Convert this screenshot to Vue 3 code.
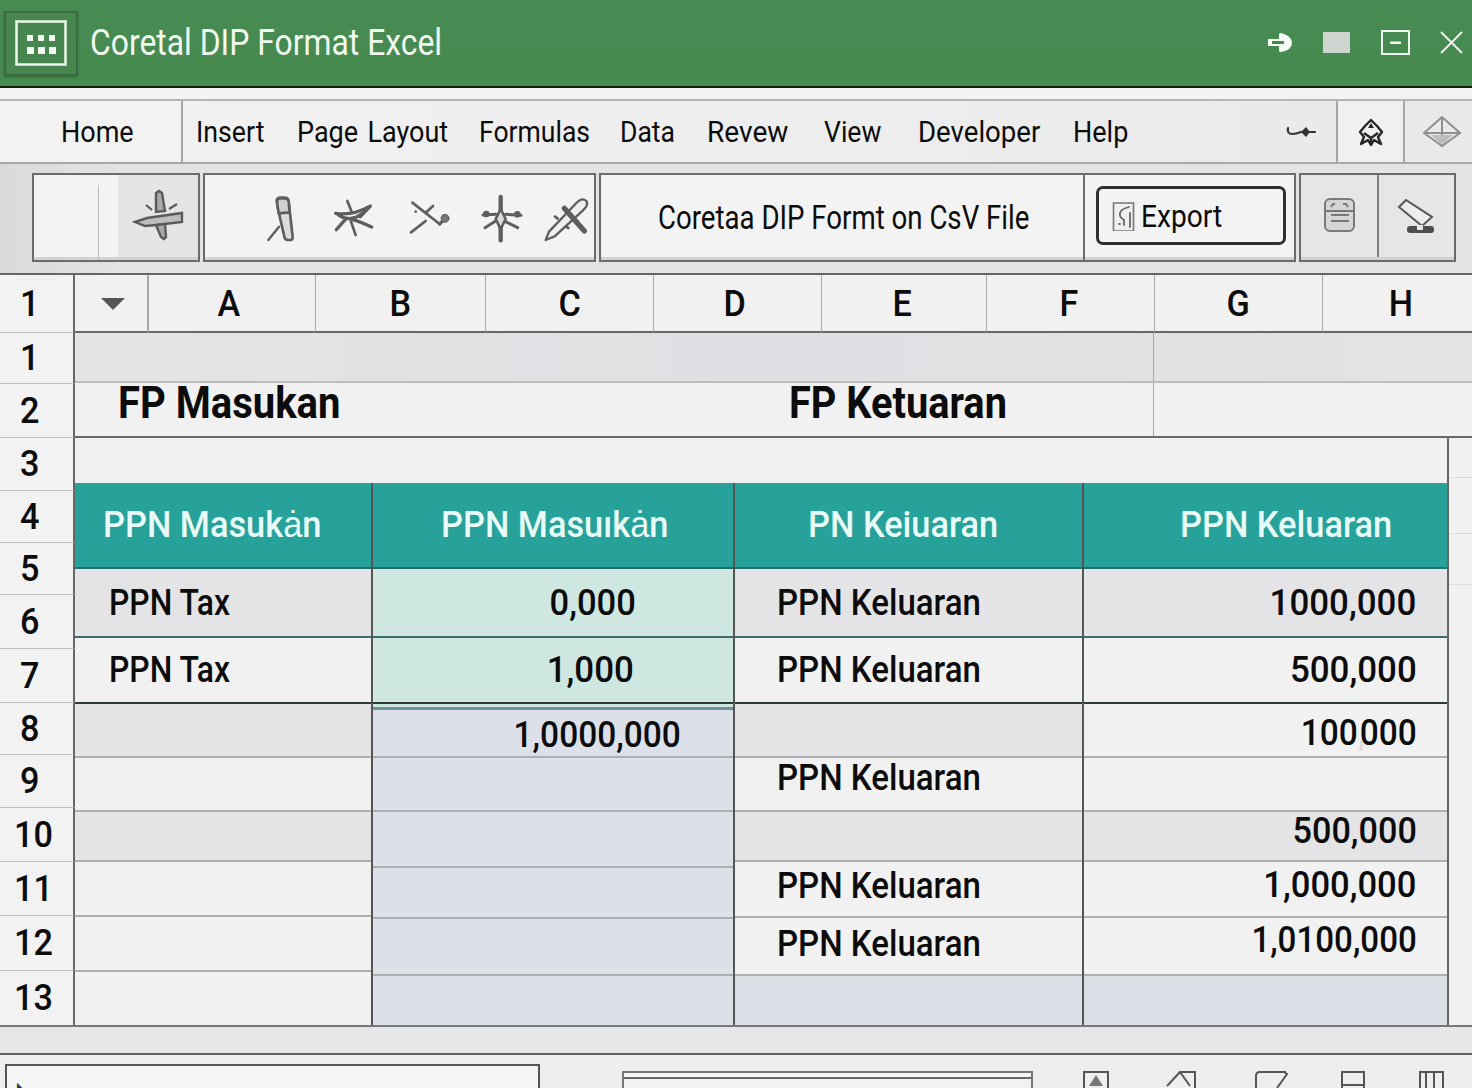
<script setup>
import { computed } from 'vue'

const tabStarts = [
  ['Insert', 196, 0.89], ['Page Layout', 297, 0.9], ['Formulas', 479, 0.885], ['Data', 620, 0.885],
  ['Revew', 707, 0.935], ['View', 824, 0.885], ['Developer', 918, 0.92], ['Help', 1073, 0.9]
]
const tabs = computed(() => tabStarts.map(([label, x, sx], i) => ({
  label,
  sx,
  width: (i + 1 < tabStarts.length ? tabStarts[i + 1][1] : 1286) - x
})))

const letters = [
  ['A', 167, -6], ['B', 170, 0], ['C', 168, 0], ['D', 168, -6], ['E', 165, -4], ['F', 168, -4], ['G', 168, 0], ['H', 150, 6]
]

const rowNums = [
  ['1', 51], ['2', 54], ['3', 53], ['4', 52], ['5', 52], ['6', 54], ['7', 54],
  ['8', 52], ['9', 53], ['10', 54], ['11', 54], ['12', 55], ['13', 55]
]

const LT = 'lt', GR = 'gr', MINT = 'mint', BL = 'bl', BG = 'bg'
const columns = [
  {
    key: 'a', width: 298, head: 'PPN Masukȧn', headPad: 28,
    cells: [
      { h: 69, bg: GR, line: 'teal', text: 'PPN Tax', pad: 34, sx: 0.885 },
      { h: 66, bg: LT, line: 'dark', text: 'PPN Tax', pad: 34, sx: 0.885 },
      { h: 54, bg: GR }, { h: 54, bg: LT }, { h: 50, bg: GR },
      { h: 55, bg: LT }, { h: 55, bg: LT }, { h: 53, bg: LT, line: 'none' }
    ]
  },
  {
    key: 'b', width: 362, head: 'PPN Masuıkȧn', headPad: 68,
    cells: [
      { h: 69, bg: MINT, line: 'teal', text: '0,000', right: 97, sx: 0.96 },
      { h: 66, bg: MINT, line: 'dark', text: '1,000', right: 99, sx: 0.97 },
      { h: 51, bg: BL, cap: true, text: '1,0000,000', right: 52, sx: 0.93, up: -4 },
      { h: 54, bg: BL }, { h: 56, bg: BL }, { h: 51, bg: BL },
      { h: 57, bg: BL }, { h: 49, bg: BL, line: 'none' }
    ]
  },
  {
    key: 'c', width: 349, head: 'PN Keiuaran', headPad: 73,
    cells: [
      { h: 69, bg: GR, line: 'teal', text: 'PPN Keluaran', pad: 42, sx: 0.918 },
      { h: 66, bg: LT, line: 'dark', text: 'PPN Keluaran', pad: 42, sx: 0.918 },
      { h: 54, bg: GR },
      { h: 54, bg: LT, text: 'PPN Keluaran', pad: 42, sx: 0.918, up: 12 },
      { h: 50, bg: GR },
      { h: 56, bg: LT, text: 'PPN Keluaran', pad: 42, sx: 0.918, up: 6 },
      { h: 58, bg: LT, text: 'PPN Keluaran', pad: 42, sx: 0.918, up: 4 },
      { h: 49, bg: BG, line: 'none' }
    ]
  },
  {
    key: 'd', width: 363, head: 'PPN Keluaran', headPad: 96,
    cells: [
      { h: 69, bg: GR, line: 'teal', text: '1000,000', right: 30.5, sx: 0.97 },
      { h: 66, bg: LT, line: 'dark', text: '500,000', right: 30.5, sx: 0.97 },
      { h: 54, bg: LT, text: '100,000', right: 30.5, sx: 0.93, up: -6, faint: true },
      { h: 54, bg: LT },
      { h: 50, bg: GR, text: '500,000', right: 30.5, sx: 0.95, up: 10 },
      { h: 56, bg: LT, text: '1,000,000', right: 30.5, sx: 0.96, up: 8 },
      { h: 58, bg: LT, text: '1,0100,000', right: 30.5, sx: 0.92, up: 12 },
      { h: 49, bg: BG, line: 'none' }
    ]
  }
]
</script>

<template>
  <div class="page">
    <header class="titlebar">
      <div class="logo">
        <svg width="52" height="46" viewBox="0 0 52 46">
          <rect x="1.5" y="1.5" width="49" height="43" fill="none" stroke="#eef7ec" stroke-width="2.5" />
          <g fill="#f4faf2">
            <rect x="12" y="15" width="6" height="6" /><rect x="23" y="15" width="6" height="6" /><rect x="34" y="15" width="6" height="6" />
            <rect x="12" y="27" width="7" height="7" /><rect x="23" y="27" width="7" height="7" /><rect x="34" y="27" width="7" height="7" />
          </g>
        </svg>
      </div>
      <span class="title">Coretal DIP Format Excel</span>
      <svg class="winctl" width="205" height="30" viewBox="1267 28 205 30">
        <path d="M1268 39h11v-5q0-1 2-1 q11 3 11 10 q0 7-11 9 q-2 0-2-1v-5h-11z" fill="#f6fbf5" />
        <rect x="1272" y="41" width="12" height="3" fill="#478a50" />
        <rect x="1323" y="32" width="27" height="21" fill="#cfd6d2" />
        <rect x="1382" y="31" width="27" height="23" fill="none" stroke="#f0f7ee" stroke-width="2" />
        <rect x="1390" y="41.5" width="11" height="2.5" fill="#f0f7ee" />
        <path d="M1441 32l21 21M1462 32l-21 21" stroke="#f0f7ee" stroke-width="1.8" fill="none" />
      </svg>
    </header>

    <div class="strip"></div>

    <nav class="tabs">
      <div class="home"><span class="sq">Home</span></div>
      <div class="tablist">
        <div v-for="t in tabs" :key="t.label" class="tab" :style="{ width: t.width + 'px' }"><span class="sq" :style="{ '--sx': t.sx }">{{ t.label }}</span></div>
      </div>
      <svg class="keyicon" width="30" height="14" viewBox="1286 124 30 14">
        <path d="M1288 127q-1 6 4 6q4 0 9-2M1310 131h5" fill="none" stroke="#333" stroke-width="2.2" stroke-linecap="round" />
        <path d="M1306 126l4 5-4 5-5-5z" fill="#333" />
      </svg>
      <div class="tabcell star">
        <svg width="28" height="30" viewBox="1355 115 28 30">
          <path d="M1369 118l6 6 5 6-4 5 3 7-7-4-3 5-3-5-7 4 3-7-4-5 5-6z" fill="none" stroke="#262626" stroke-width="2.4" stroke-linejoin="round" />
          <path d="M1362 131l7 5 7-5M1369 136v7" fill="none" stroke="#262626" stroke-width="2.4" />
          <path d="M1369 121l3 5h-6z" fill="#262626" />
        </svg>
      </div>
      <div class="tabcell">
        <svg width="40" height="34" viewBox="1421 113 40 34">
          <path d="M1423 131l18-16 18 16-18 13z" fill="none" stroke="#8f8f8f" stroke-width="2" />
          <path d="M1423 131h36M1441 115v28" stroke="#8f8f8f" stroke-width="2" fill="none" />
          <path d="M1430 133h22l-11 10z" fill="#bdbdbd" />
        </svg>
      </div>
    </nav>

    <section class="ribbon">
      <div class="grp g1">
        <div class="blank"></div>
        <div class="hi">
          <svg width="52" height="54" viewBox="131 190 52 54">
            <path d="M155 194l3-2 3 2 3 18-9 1z" fill="#a9a9a9" stroke="#5a5a5a" stroke-width="2.4" />
            <path d="M134 223l12-4 35-5 0 9-26 3-11 1z" fill="#bdbdbd" stroke="#5a5a5a" stroke-width="2.4" />
            <path d="M155 226l9-1 1 13-2 2-3-2z" fill="#a9a9a9" stroke="#5a5a5a" stroke-width="2.4" />
            <path d="M145 206l6 5M176 205l-8 5" stroke="#5a5a5a" stroke-width="2.2" fill="none" />
          </svg>
        </div>
      </div>
      <div class="grp g2">
        <svg class="tools" width="388" height="85" viewBox="15 10 1164 255">
          <g fill="none" stroke="#5e5e5e" stroke-linecap="round" stroke-linejoin="round">
            <path d="M233 88q0-10 12-10h10q13 0 14 12l12 106q1 9-8 9h-5q-10 0-12-10L240 125z" fill="#dcdcdc" stroke-width="8" />
            <path d="M234 90q0-10 10-10h12q12 0 13 10l3 32-33 3z" fill="#cfcfcf" stroke-width="8" />
            <path d="M208 205l32-40" stroke-width="7" />
            <path d="M445 88l13 32M456 150l14 40" stroke-width="8" />
            <path d="M410 125q50 8 100-20M412 174l30-34q25 2 76 26M484 135l30-32M418 130q35 24 72-5" stroke-width="10" />
            <path d="M640 93l82 64M702 103l-22 20M636 182l44-34" stroke-width="8" />
            <circle cx="650" cy="120" r="4" fill="#5e5e5e" stroke="none" />
            <path d="M722 157l10-10" stroke-width="10" />
            <circle cx="738" cy="140" r="12" fill="#777" stroke-width="3" />
            <path d="M905 76v130" stroke-width="13" />
            <path d="M905 112l15 30-15 30-15-30z" fill="#dcdcdc" stroke-width="8" />
            <path d="M852 130l38-2M920 128l46 3M858 168l32-20M920 150l36 18" stroke-width="9" />
            <circle cx="862" cy="127" r="10" fill="#5e5e5e" stroke="none" />
            <circle cx="955" cy="128" r="10" fill="#5e5e5e" stroke="none" />
            <path d="M1040 205l10-25 82-86q18-18 30-6 8 12-10 28l-85 78z" fill="#efefef" stroke-width="7" />
            <path d="M1096 110l60 68" stroke-width="16" />
            <path d="M1068 135l8 6M1100 165l8 4" stroke-width="8" />
          </g>
        </svg>
      </div>
      <div class="grp g3"><span class="sq">Coretaa DIP Formt on CsV File</span></div>
      <div class="grp g4">
        <button class="export" type="button">
          <svg width="23" height="30" viewBox="1111 200 23 30">
            <path d="M1112.5 230v-28h20v28z" fill="#efefef" stroke="#777" stroke-width="1.6" />
            <path d="M1128 206q-8 2-9 6t4 7v5M1129 212v14M1118 223h1" fill="none" stroke="#666" stroke-width="1.8" stroke-linecap="round" />
          </svg>
          <span class="sq">Export</span>
        </button>
      </div>
      <div class="grp g5">
        <div class="g5cell">
          <svg width="34" height="36" viewBox="1322 198 34 36">
            <rect x="1325" y="199" width="29" height="32" rx="5" fill="#d5d5d5" stroke="#7a7a7a" stroke-width="2" />
            <path d="M1331 207l2-3h2M1343 204h3l2 3M1325 211h29M1331 215h18M1331 221h18" fill="none" stroke="#777" stroke-width="2" />
          </svg>
        </div>
        <div class="g5cell">
          <svg width="42" height="38" viewBox="1397 197 42 38">
            <path d="M1401 207l7-7 26 17-10 9z" fill="#ececec" stroke="#555" stroke-width="2" />
            <rect x="1409" y="226" width="27" height="7" rx="3" fill="#4e4e4e" />
            <rect x="1419" y="225" width="6" height="5" fill="#e8e8e8" />
          </svg>
        </div>
      </div>
    </section>

    <div class="colhead">
      <div class="rn headrn"><span>1</span></div>
      <div class="corner"><i class="caret"></i></div>
      <div v-for="[l, w, shift] in letters" :key="l" class="letter" :style="{ width: w + 'px' }">
        <span class="letterText" :style="{ marginLeft: shift + 'px' }">{{ l }}</span>
      </div>
    </div>

    <main class="sheet">
      <div class="rownums">
        <div v-for="[n, h] in rowNums" :key="n + h" class="rn" :class="{ two: n.length > 1 }" :style="{ height: h + 'px' }"><span>{{ n }}</span></div>
      </div>
      <div class="grid">
        <div class="band b1"><div class="wide"></div><div class="narrow"></div></div>
        <div class="band b2">
          <div class="wide titles">
            <span class="fp fp1">FP Masukan</span>
            <span class="fp fp2">FP Ketuaran</span>
          </div>
          <div class="narrow"></div>
        </div>
        <div class="lower">
          <div class="main">
            <div class="spacer"></div>
            <div class="cols">
              <div v-for="c in columns" :key="c.key" class="col" :class="c.key" :style="{ width: c.width + 'px' }">
                <div class="th" :style="{ paddingLeft: c.headPad + 'px' }"><span class="sq">{{ c.head }}</span></div>
                <div
                  v-for="(cell, i) in c.cells"
                  :key="i"
                  class="td"
                  :class="[cell.bg, cell.line || 'soft', { cap: cell.cap, end: cell.right }]"
                  :style="{ height: cell.h + 'px', paddingLeft: (cell.pad || 0) + 'px', paddingRight: (cell.right || 0) + 'px', paddingBottom: (cell.up || 0) > 0 ? cell.up + 'px' : 0, paddingTop: (cell.up || 0) < 0 ? -cell.up + 'px' : 0 }"
                >
                  <span v-if="cell.faint" class="sq num" :style="{ '--sx': cell.sx }">{{ cell.text.split(',')[0] }}<span class="faint">,</span>{{ cell.text.split(',')[1] }}</span>
                  <span v-else-if="cell.text" class="sq" :class="{ num: cell.right }" :style="{ '--sx': cell.sx }">{{ cell.text }}</span>
                </div>
              </div>
            </div>
          </div>
          <div class="gutter">
            <div class="gl" style="height: 40px"></div>
            <div class="gl" style="height: 56px"></div>
            <div class="gl" style="height: 51px"></div>
          </div>
        </div>
      </div>
    </main>

    <footer class="foot">
      <div class="footstrip"></div>
      <div class="footbar">
        <div class="namebox"><span class="cursor">◣</span></div>
        <div class="scrollbox"></div>
        <svg class="footicons" width="370" height="17" viewBox="1078 1071 370 17">
          <g fill="none" stroke="#555" stroke-width="2">
            <path d="M1084 1088v-16h24v16" />
            <path d="M1089 1086l7-11 7 11z" fill="#777" stroke="none" />
            <path d="M1167 1086l13-14h15v16M1180 1072l10 14" />
            <path d="M1256 1088v-12q0-4 4-4h24l3 2-10 14M1268 1071h18" />
            <path d="M1342 1088v-16h22v16M1342 1085h22" />
            <path d="M1420 1088v-16h23v16M1426 1072v16M1434 1072v16" />
          </g>
        </svg>
      </div>
    </footer>
  </div>
</template>

<style>
html, body { margin: 0; background: #eee; overflow: hidden; }
</style>

<style scoped>
.page {
  width: 1472px;
  height: 1088px;
  overflow: hidden;
  display: flex;
  flex-direction: column;
  font-family: Roboto, "Liberation Sans", sans-serif;
  color: #0c0c0c;
  background: #efefef;
}
.sq {
  display: inline-block;
  white-space: nowrap;
  transform: scaleX(var(--sx, .9));
  transform-origin: left center;
}
.faint { opacity: .08; letter-spacing: -6px; }

.titlebar {
  height: 86px;
  flex: none;
  display: flex;
  align-items: center;
  background: linear-gradient(#478b52, #468a50);
  border-bottom: 2px solid #10210f;
  box-sizing: content-box;
}
.logo {
  width: 74px;
  height: 65px;
  margin-left: 4px;
  box-sizing: border-box;
  display: flex;
  align-items: center;
  justify-content: center;
  background: #47874f;
  border: 2px solid #3a6d41;
  box-shadow: 0 1px 2px rgba(0, 0, 0, .25);
}
.title {
  margin-left: 12px;
  font-size: 36px;
  color: #f1f8ef;
  white-space: nowrap;
  transform: scaleX(.885);
  transform-origin: left center;
}
.winctl { margin-left: auto; }

.strip { height: 11px; flex: none; background: #f3f3f3; }

.tabs {
  height: 65px;
  flex: none;
  box-sizing: border-box;
  display: flex;
  align-items: stretch;
  border-top: 2px solid #b4b4b4;
  border-bottom: 2px solid #a9a9a9;
  background: linear-gradient(90deg, #f2f2f2, #ededed 60%, #e9e9e9);
  font-size: 30px;
  word-spacing: 3px;
}
.home {
  width: 183px;
  flex: none;
  box-sizing: border-box;
  padding-left: 61px;
  display: flex;
  align-items: center;
  border-right: 2px solid #a5a5a5;
  background: #f2f2f2;
}
.tablist { display: flex; align-items: center; padding-left: 13px; }
.tab { flex: none; }
.keyicon { align-self: center; flex: none; width: 30px; margin-right: 20px; }
.tabcell {
  width: 69px;
  flex: none;
  box-sizing: border-box;
  display: flex;
  align-items: center;
  justify-content: center;
  padding-left: 6px;
  border-left: 2px solid #a5a5a5;
}
.tabcell.star { width: 67px; padding-left: 0; background: #f0f0f0; }

.ribbon {
  height: 111px;
  flex: none;
  box-sizing: border-box;
  display: flex;
  padding: 9px 0 0 32px;
  background: linear-gradient(90deg, #d9dadc, #e3e3e4 8%, #e3e3e4);
  border-bottom: 2px solid #666;
}
.grp {
  height: 89px;
  flex: none;
  box-sizing: border-box;
  display: flex;
  align-items: center;
  background: #f3f3f3;
  border: 2px solid #6b6b6b;
  box-shadow: inset 0 -3px 0 #d2d2d2;
}
.g1 { width: 168px; align-items: stretch; }
.blank { width: 64px; margin: 10px 0 0; border-right: 1.5px solid #bdbdbd; flex: none; }
.hi {
  width: 80px;
  margin-left: auto;
  background: #e5e5e6;
  display: flex;
  align-items: center;
  justify-content: center;
  margin-bottom: 3px;
}
.g2 { width: 393px; margin-left: 3px; }
.tools { margin-left: -1px; }
.g3 {
  width: 484px;
  margin-left: 3px;
  font-size: 33px;
  padding-left: 57px;
  border-right: none;
}
.g3 .sq { --sx: .837; }
.g4 { width: 213px; padding-left: 11px; margin-right: 3px; border-left: 2px solid #6b6b6b; }
.export {
  width: 190px;
  height: 59px;
  padding: 0 0 0 13px;
  margin-top: -4px;
  box-sizing: border-box;
  border: 3px solid #2f2f2f;
  border-radius: 7px;
  background: #f3f3f3;
  display: flex;
  align-items: center;
  gap: 6px;
  font: 400 32px Roboto, "Liberation Sans", sans-serif;
  color: #0c0c0c;
}
.export .sq { --sx: .88; }
.g5 { width: 157px; background: #e6e6e7; align-items: stretch; }
.g5cell { flex: 1; display: flex; align-items: center; justify-content: center; margin-bottom: 3px; }
.g5cell + .g5cell { border-left: 2px solid #808080; }

.colhead {
  height: 58px;
  flex: none;
  display: flex;
  background: #f1f1f1;
}
.colhead .corner {
  width: 74px;
  flex: none;
  display: flex;
  align-items: center;
  justify-content: center;
  box-sizing: border-box;
  border-bottom: 2px solid #686868;
  border-right: 2px solid #a9a9a9;
}
.caret {
  width: 0; height: 0;
  border-left: 12px solid transparent;
  border-right: 12px solid transparent;
  border-top: 12px solid #565656;
  margin: 2px 0 0 3px;
}
.letter {
  flex: none;
  box-sizing: border-box;
  display: flex;
  align-items: center;
  justify-content: center;
  font-size: 36px;
  font-weight: 500;
  border-bottom: 2px solid #686868;
  border-right: 1.5px solid #a9a9a9;
}
.letterText { display: inline-block; transform: scaleX(.95); padding-top: 2px; }
.letter:last-child { border-right: none; }

.sheet { height: 692px; flex: none; display: flex; }
.rownums { width: 75px; flex: none; }
.rn {
  width: 75px;
  flex: none;
  box-sizing: border-box;
  display: flex;
  align-items: center;
  padding-left: 20px;
  font-size: 36px;
  font-weight: 500;
  background: #f2f2f2;
  border-right: 2px solid #666;
  border-bottom: 1.5px solid #c2c2c2;
}
.rn span { transform: scaleX(.95); transform-origin: left center; display: inline-block; }
.rn.two { padding-left: 14px; }
.headrn { height: 58px; border-bottom-color: #b9b9b9; }

.grid { flex: 1; min-width: 0; display: flex; flex-direction: column; }
.band { display: flex; flex: none; }
.b1 { height: 48px; background: linear-gradient(90deg, #e4e4e6, #dfe0e3 50%, #e3e3e5); border-bottom: 2px solid #bdbdbd; box-sizing: content-box; }
.b2 { height: 53px; background: #f1f1f1; border-bottom: 2px solid #686868; box-sizing: content-box; }
.wide { width: 1079px; flex: none; box-sizing: border-box; border-right: 1.5px solid #a9a9a9; }
.narrow { flex: 1; }
.titles { display: flex; align-items: center; }
.fp {
  font-size: 44px;
  font-weight: 700;
  white-space: nowrap;
  transform: scaleX(.91);
  transform-origin: left center;
  margin-top: -14px;
}
.fp1 { margin-left: 43px; }
.fp2 { margin-left: 427px; transform: scaleX(.903); }

.lower { flex: 1; display: flex; min-height: 0; }
.main { width: 1372px; flex: none; display: flex; flex-direction: column; }
.spacer { height: 45px; flex: none; background: #f1f1f1; }
.cols { display: flex; flex: 1; min-height: 0; }
.col { flex: none; box-sizing: border-box; border-right: 2px solid #555; display: flex; flex-direction: column; }
.col.d { border-right: none; }
.th {
  height: 86px;
  flex: none;
  box-sizing: border-box;
  display: flex;
  align-items: center;
  background: #27a29b;
  border-bottom: 2px solid #1f6f6c;
  color: #e9fbf7;
  font-size: 36px;
  font-weight: 500;
}
.th .sq { --sx: .955; }
.td {
  flex: none;
  box-sizing: border-box;
  display: flex;
  align-items: center;
  font-size: 36px;
  border-bottom: 2px solid #aeaeae;
  font-weight: 500;
}
.td.end { justify-content: flex-end; }
.td .sq.num { transform-origin: right center; }
.td.lt { background: #f1f1f1; }
.td.gr { background: #e4e4e6; }
.td.mint { background: #cfe7e1; }
.td.bl { background: #dbe0e9; }
.td.bg { background: #dcdfe5; }
.td.teal { border-bottom: 2px solid #3d6a70; }
.td.dark { border-bottom: 2px solid #2e3a3a; }
.td.none { border-bottom: none; }
.td.cap { border-top: 3px solid #6c9498; margin-top: 3px; box-shadow: 0 -3px 0 #cfe7e1; }

.gutter {
  flex: 1;
  box-sizing: border-box;
  border-left: 2px solid #666;
  background: #f1f1f1;
}
.gl { box-sizing: border-box; border-bottom: 1px solid #dedede; }

.foot { flex: 1; min-height: 0; display: flex; flex-direction: column; overflow: hidden; }
.footstrip {
  height: 30px;
  flex: none;
  background: #e6e6e7;
  border-top: 2px solid #777;
  border-bottom: 2px solid #5f5f5f;
  box-sizing: border-box;
}
.footbar { flex: 1; min-height: 0; display: flex; align-items: flex-start; background: #eeeeee; }
.namebox {
  width: 535px;
  height: 40px;
  margin: 9px 0 0 5px;
  box-sizing: border-box;
  flex: none;
  background: linear-gradient(#f4f4f4, #fafafa);
  border: 2px solid #555;
  padding-left: 10px;
  font-size: 8px;
  line-height: 40px;
}
.cursor { color: #333; }
.scrollbox {
  width: 411px;
  height: 40px;
  margin: 16px 0 0 82px;
  box-sizing: border-box;
  flex: none;
  background: linear-gradient(#f6f6f6 4px, #666 4px, #666 6px, #f2f2f2 6px);
  border: 2px solid #777;
  border-bottom: none;
}
.footicons { flex: none; margin: 16px 0 0 45px; }
</style>
